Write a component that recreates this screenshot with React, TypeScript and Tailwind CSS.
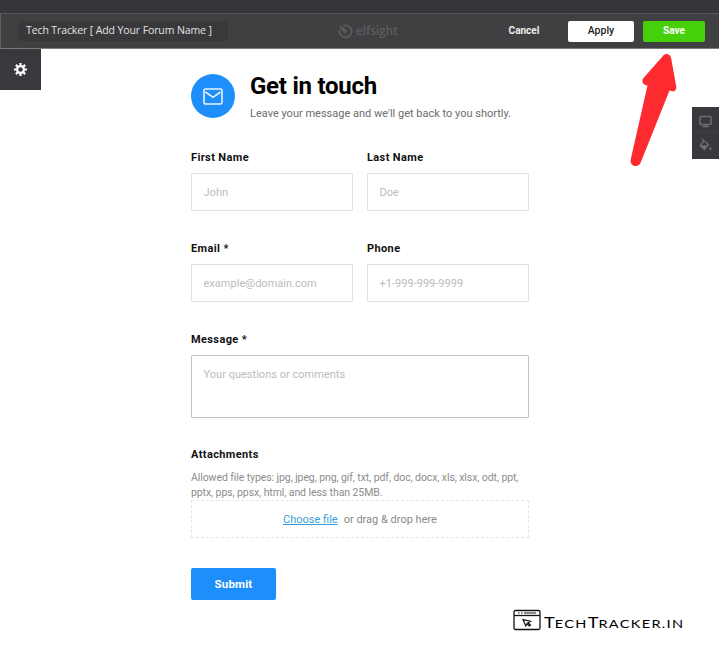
import type { ReactNode } from "react";

function Field({ label, placeholder, area = false }: { label: string; placeholder: string; area?: boolean }) {
  return (
    <label className="block">
      <span className="block h-4 text-[11px] leading-4 font-bold tracking-[0.38px] text-[#111]">{label}</span>
      {area ? (
        <textarea
          placeholder={placeholder}
          className="mt-[7px] block h-[63px] w-full resize-none rounded-[1px] border border-[#c2c2c2] px-[11.5px] py-[11px] text-[11px] leading-4 tracking-[0.02px] placeholder:text-[#bcbcbc]"
        />
      ) : (
        <input
          placeholder={placeholder}
          className="mt-[7px] block h-[38px] w-full rounded-[1px] border border-[#e0e0e0] px-[11.5px] text-[11px] leading-4 tracking-[0.02px] placeholder:text-[#bcbcbc]"
        />
      )}
    </label>
  );
}

function ElfsightMark() {
  return (
    <svg className="h-[15px] w-[15px]" viewBox="0 0 15 15" fill="none" stroke="#5c5c5f" strokeWidth="1.7">
      <path d="M5.5 1.7A6 6 0 1 1 1.7 5.9" />
      <path d="M.5 .8 8 5.2A2 2 0 1 1 5.2 8Z" fill="#5c5c5f" stroke="none" />
    </svg>
  );
}

function Gear() {
  return (
    <svg className="h-[13px] w-[13px]" viewBox="0 0 13 13" fill="none" stroke="#fff">
      <circle cx="6.5" cy="6.5" r="3.4" strokeWidth="2.2" />
      <g strokeWidth="2.2">
        <path d="M6.5 0v2.6M6.5 10.4V13M0 6.5h2.6M10.4 6.5H13M1.9 1.9l1.8 1.8M9.3 9.3l1.8 1.8M1.9 11.1l1.8-1.8M9.3 3.7l1.8-1.8" />
      </g>
    </svg>
  );
}

function Tool({ children }: { children: ReactNode }) {
  return <button className="flex h-[25px] w-full items-center justify-center">{children}</button>;
}

export default function App() {
  return (
    <div className="relative h-[645px] w-[719px] overflow-hidden bg-white font-[Roboto,sans-serif]">
      <div className="h-[13px] bg-[#35363a]" />
      <header className="flex h-[36px] items-center border-y border-l border-t-[#56575a] border-b-[#7b7b7d] border-l-[#5c5d60] bg-[#404042]">
        <div className="ml-[17px] flex h-5 w-[210px] items-center rounded-[2px] bg-[#39393b] pl-[8px] font-['Open_Sans',sans-serif] text-[10.5px] tracking-[-0.11px] whitespace-nowrap text-[#e2e2e2]">
          Tech Tracker [ Add Your Forum Name ]
        </div>
        <div className="ml-[110px] flex w-[64px] items-center gap-[3px] text-[#5c5c5f]">
          <ElfsightMark />
          <span className="relative -top-px font-['Open_Sans',sans-serif] text-[12px] leading-[15px] font-semibold tracking-[-0.15px]">elfsight</span>
        </div>
        <button className="ml-[98px] w-[48px] pb-px text-[10px] font-bold text-[#eee]">Cancel</button>
        <button className="ml-[20px] h-[21px] w-[66px] rounded-[2px] bg-white text-[10.5px] font-medium text-[#222]">Apply</button>
        <button className="ml-[9px] h-[21px] w-[62px] rounded-[2px] bg-[#46d00a] pb-px text-[10px] font-bold text-white">Save</button>
      </header>

      <button className="absolute top-[49px] left-0 flex h-[41px] w-[41px] items-center justify-center bg-[#38393c]">
        <Gear />
      </button>

      <main className="ml-[191px] w-[338px] pt-[24px]">
        <div className="flex h-[46px] items-center">
          <div className="flex h-[44px] w-[44px] items-center justify-center rounded-full bg-[#1e8efa]">
            <svg className="h-[17px] w-5" viewBox="0 0 20 17" fill="none" stroke="#e9f4ff" strokeWidth="1.6">
              <rect x="1" y="1" width="18" height="15" rx="1.5" />
              <path d="m2.5 4 7.5 5.3L17.5 4" />
            </svg>
          </div>
          <div className="ml-[15px] pt-[2px] whitespace-nowrap">
            <h1 className="h-[33px] text-[24px] leading-[26px] font-bold tracking-[-0.25px] text-black">Get in touch</h1>
            <p className="h-4 text-[11px] leading-4 text-[#6c6c6c]">Leave your message and we'll get back to you shortly.</p>
          </div>
        </div>
        <form className="mt-[31px]">
          <div className="grid grid-cols-2 gap-x-[14px] gap-y-[30px]">
            <Field label="First Name" placeholder="John" />
            <Field label="Last Name" placeholder="Doe" />
            <Field label="Email *" placeholder="example@domain.com" />
            <Field label="Phone" placeholder="+1-999-999-9999" />
          </div>
          <div className="mt-[30px]">
            <Field label="Message *" placeholder="Your questions or comments" area />
          </div>
          <div className="mt-[29px]">
            <div className="h-4 text-[11px] leading-4 font-bold tracking-[0.38px] text-[#111]">Attachments</div>
            <p className="mt-[7px] text-[10.5px] leading-[15px] tracking-[-0.085px] whitespace-nowrap text-[#8d8d8d]">
              Allowed file types: jpg, jpeg, png, gif, txt, pdf, doc, docx, xls, xlsx, odt, ppt,
              <br />
              pptx, pps, ppsx, html, and less than 25MB.
            </p>
            <div className="flex h-[38px] items-center justify-center gap-[6px] border border-dashed border-[#e6e6e6] pt-[2px] text-[11px] text-[#8a8a8a]">
              <a className="text-[#399fd6] underline">Choose file</a>
              <span>or drag &amp; drop here</span>
            </div>
          </div>
          <button type="button" className="mt-[30px] block h-[32px] w-[85px] rounded-[2px] bg-[#1e8efa] pt-px text-[11.5px] font-bold tracking-[0.15px] text-white">
            Submit
          </button>
        </form>
      </main>

      <svg className="absolute top-[52px] left-[628px] h-[116px] w-[52px]" viewBox="0 0 52 116" fill="#fd2a30">
        <path d="M34.5 4.5C37 .5 42 1.500 43 5.500L48.300 35C48.500 38.500 46 40.500 41.500 38.500L12.700 110.500C10.500 116.500 1.500 114.500 2.700 107.500L19.500 33.500C14.500 33 13 29 15.500 26Z" />
      </svg>

      <aside className="absolute top-[107px] right-0 h-[52px] w-[27px] bg-[#38393c]">
        <Tool>
          <svg className="mt-[3px] mr-px h-[13px] w-[13px]" viewBox="0 0 13 13" fill="none" stroke="#6e6e70" strokeWidth="1.5">
            <rect x="1" y="1.5" width="11" height="8" rx=".8" />
            <path d="M3.5 11.500h6M6.500 10v2" />
          </svg>
        </Tool>
        <div className="h-px bg-[#404144]" />
        <Tool>
          <svg className="mr-px mb-[2px] h-[13px] w-[13px]" viewBox="0 0 13 13" fill="#6e6e70">
            <path d="m3 1 6.500 5.500-4 5.200L1 7.500 5 3" fill="none" stroke="#6e6e70" strokeWidth="1.200" />
            <path d="M1 7.200h8.200l-3.700 4.500zM11.300 8.500c.8 1.200 1.200 1.900 1.200 2.500a1.100 1.100 0 0 1-2.200 0c0-.6.400-1.300 1-2.500" />
          </svg>
        </Tool>
      </aside>

      <div className="absolute top-[609px] left-[513px] flex items-start whitespace-nowrap text-black">
        <svg className="h-[22px] w-[28px]" viewBox="0 0 28 22" fill="none" stroke="#111" strokeWidth="1.300">
          <rect x="1" y="1.500" width="26" height="19" rx="1.500" />
          <path d="M1 6.500h26" />
          <path d="M5 4h1.500M8 4h1.500M11 4h12" strokeWidth="1" />
          <path d="m10 10.500 7.500 1.800-2.500 1.500 2.500 2.200-1.200 1-2.300-2.200-1.200 2.200Z" strokeWidth="1.200" />
        </svg>
        <div className="ml-[3px] h-5 origin-left scale-x-[1.21] font-[Lato,sans-serif] leading-[25px]">
          <span className="text-[15px]">T</span>
          <span className="text-[12px] tracking-[1.1px]">ECH</span>
          <span className="text-[15px]">T</span>
          <span className="text-[12px] tracking-[1.1px]">RACKER.IN</span>
        </div>
      </div>
    </div>
  );
}
